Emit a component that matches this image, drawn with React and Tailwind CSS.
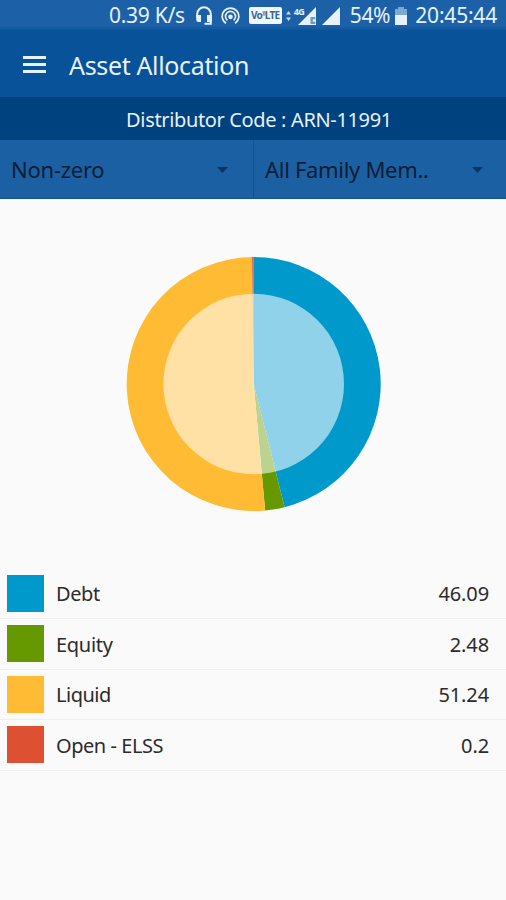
import React from 'react';

const assets = [
  { name: 'Debt', value: 46.09, fill: '#0099cc', swatch: 'bg-[#0099cc]', tracking: 'tracking-[-0.4px]' },
  { name: 'Equity', value: 2.48, fill: '#669900', swatch: 'bg-[#669900]', tracking: 'tracking-[-0.3px]' },
  { name: 'Liquid', value: 51.24, fill: '#ffbb33', swatch: 'bg-[#ffbb33]', tracking: 'tracking-[-0.5px]' },
  { name: 'Open - ELSS', value: 0.2, fill: '#dd5132', swatch: 'bg-[#dd5132]', tracking: 'tracking-[-0.45px]' },
];

const StatusBar = () => (
  <div className="flex h-[30px] items-center justify-end bg-gradient-to-b from-[#1c61a7] from-85% to-[#0f559d] pt-px pr-[9px] text-[21px] text-[#e6f1fb]">
    <span className="pt-px tracking-[-0.3px] whitespace-nowrap">0.39 K/s</span>

    {/* Headset */}
    <svg className="ml-[10px] h-[19px] w-[18px] shrink-0" viewBox="0 0 18 19" fill="none">
      <path d="M2.2 12V8a6.8 6.8 0 0 1 13.6 0v9.8H9.5" stroke="currentColor" strokeWidth="2" />
      <path d="M1.2 9H6v7H3.4a2.2 2.2 0 0 1-2.2-2.2zM12 9h4.8v7H12z" fill="currentColor" />
    </svg>

    {/* Hotspot */}
    <svg className="ml-[8px] h-[18px] w-[19px] shrink-0" viewBox="0 0 19 18" fill="none" stroke="currentColor" strokeWidth="1.7">
      <path d="M5 16.3a8.3 8.3 0 1 1 9 0" />
      <path d="M6.4 13.3a5 5 0 1 1 6.2 0" />
      <circle cx="9.5" cy="9.8" r="1.5" fill="currentColor" />
    </svg>

    <span className="ml-[9px] flex h-[17px] w-[33px] shrink-0 items-center justify-center rounded-[2px] bg-[#f1f7fd] text-[10px] font-bold tracking-[-0.7px] text-[#34679b]">
      Vo<span className="mb-[5px] text-[6px]">))</span>LTE
    </span>

    {/* Data activity */}
    <svg className="ml-[4px] h-[10px] w-[5px] shrink-0" viewBox="0 0 5 10" fill="currentColor">
      <path d="M2.5 0 5 3.5H0zM2.5 10 0 6.5h5z" opacity="0.85" />
    </svg>

    <span className="ml-[3px] mb-[9px] w-[11px] text-[9px] leading-none font-bold tracking-[-0.6px]">4G</span>
    <svg className="-ml-[7px] h-[18px] w-[18px] shrink-0" viewBox="0 0 18 18">
      <path d="M0 18 18 0v18z" fill="currentColor" />
      <path d="M12.5 10h4.8v2.2h-2.4v2.6h2.4V17h-4.8z" fill="#6b9bc8" />
    </svg>
    <svg className="ml-[6px] h-[18px] w-[18px] shrink-0" viewBox="0 0 18 18">
      <path d="M0 18 18 0v18z" fill="currentColor" />
    </svg>

    <span className="ml-[10px] pt-px tracking-[-0.3px]">54%</span>

    {/* Battery */}
    <svg className="ml-[5px] h-[18px] w-[12px] shrink-0" viewBox="0 0 12 18">
      <path d="M3 0h6v2h3v6H0V2h3z" fill="#7da8d2" />
      <path d="M0 8h12v10H0z" fill="currentColor" />
    </svg>

    <span className="ml-[8px] pt-px tracking-[-0.2px]">20:45:44</span>
  </div>
);

const AppBar = () => (
  <div className="flex h-[67px] items-center bg-[#08529a] pt-[2px] pl-[23px] text-[#e6f1fb]">
    <button className="flex w-[23px] flex-col gap-[4px]" aria-label="Menu">
      <span className="h-[3px] w-full bg-current" />
      <span className="h-[3px] w-full bg-current" />
      <span className="h-[3px] w-full bg-current" />
    </button>
    <h1 className="ml-[23px] pt-[2px] text-[25px] leading-none tracking-[-0.35px]">Asset Allocation</h1>
  </div>
);

const FilterSelect = ({ label, className }) => (
  <button className={`flex h-full items-center justify-between text-left text-[22px] text-[#0b1d33] ${className}`}>
    <span>{label}</span>
    <svg className="h-[6px] w-[11px]" viewBox="0 0 11 6">
      <path d="M0 0h11L5.5 6z" fill="#0d3560" />
    </svg>
  </button>
);

const point = (share, r) => {
  const angle = share * 2 * Math.PI;
  return `${r * Math.sin(angle)} ${-r * Math.cos(angle)}`;
};

const AssetPie = () => {
  const total = assets.reduce((sum, a) => sum + a.value, 0);
  let start = 0;

  return (
    <svg className="h-[254px] w-[255px]" viewBox="-127.7 -127 255 254">
      {assets.map((asset) => {
        const from = start / total;
        start += asset.value;
        const to = start / total;
        const large = to - from > 0.5 ? 1 : 0;
        return (
          <path
            key={asset.name}
            d={`M0 0L${point(from, 127)}A127 127 0 ${large} 1 ${point(to, 127)}Z`}
            fill={asset.fill}
          />
        );
      })}
      <circle r="90.3" fill="#fff" fillOpacity="0.56" />
    </svg>
  );
};

const App = () => {
  return (
    <div className="flex h-[900px] w-[506px] flex-col overflow-hidden bg-[#fafafa] font-['Noto_Sans',sans-serif]">
      <StatusBar />
      <AppBar />

      <div className="flex h-[43px] items-center justify-center bg-[#00417f] pt-[2px] pl-[12px] text-[20px] tracking-[-0.35px] text-[#e6f1fb]">
        Distributor Code : ARN-11991
      </div>

      <div className="flex h-[59px] border-b border-[#0d549b] bg-[#1c60a4]">
        <FilterSelect label="Non-zero" className="w-[254px] border-r border-[#14528f] pt-px pr-[25px] pl-[11px] tracking-[-0.25px]" />
        <FilterSelect label="All Family Mem.." className="w-[252px] pt-px pr-[23px] pl-[11px] tracking-[-0.3px]" />
      </div>

      <div className="flex h-[369.4px] items-center justify-center pt-px pl-px">
        <AssetPie />
      </div>

      <ul>
        {assets.map((asset) => (
          <li key={asset.name} className="flex h-[50.6px] items-center border-b border-[#efefef] pr-[17px] pl-[7px] text-[20px] text-[#2b2b2b]">
            <span className={`h-[37px] w-[37px] ${asset.swatch}`} />
            <span className={`ml-[12px] flex-1 pt-[2px] ${asset.tracking}`}>{asset.name}</span>
            <span className="pt-[2px] tracking-[-0.1px]">{asset.value}</span>
          </li>
        ))}
      </ul>
    </div>
  );
};

export default App;
